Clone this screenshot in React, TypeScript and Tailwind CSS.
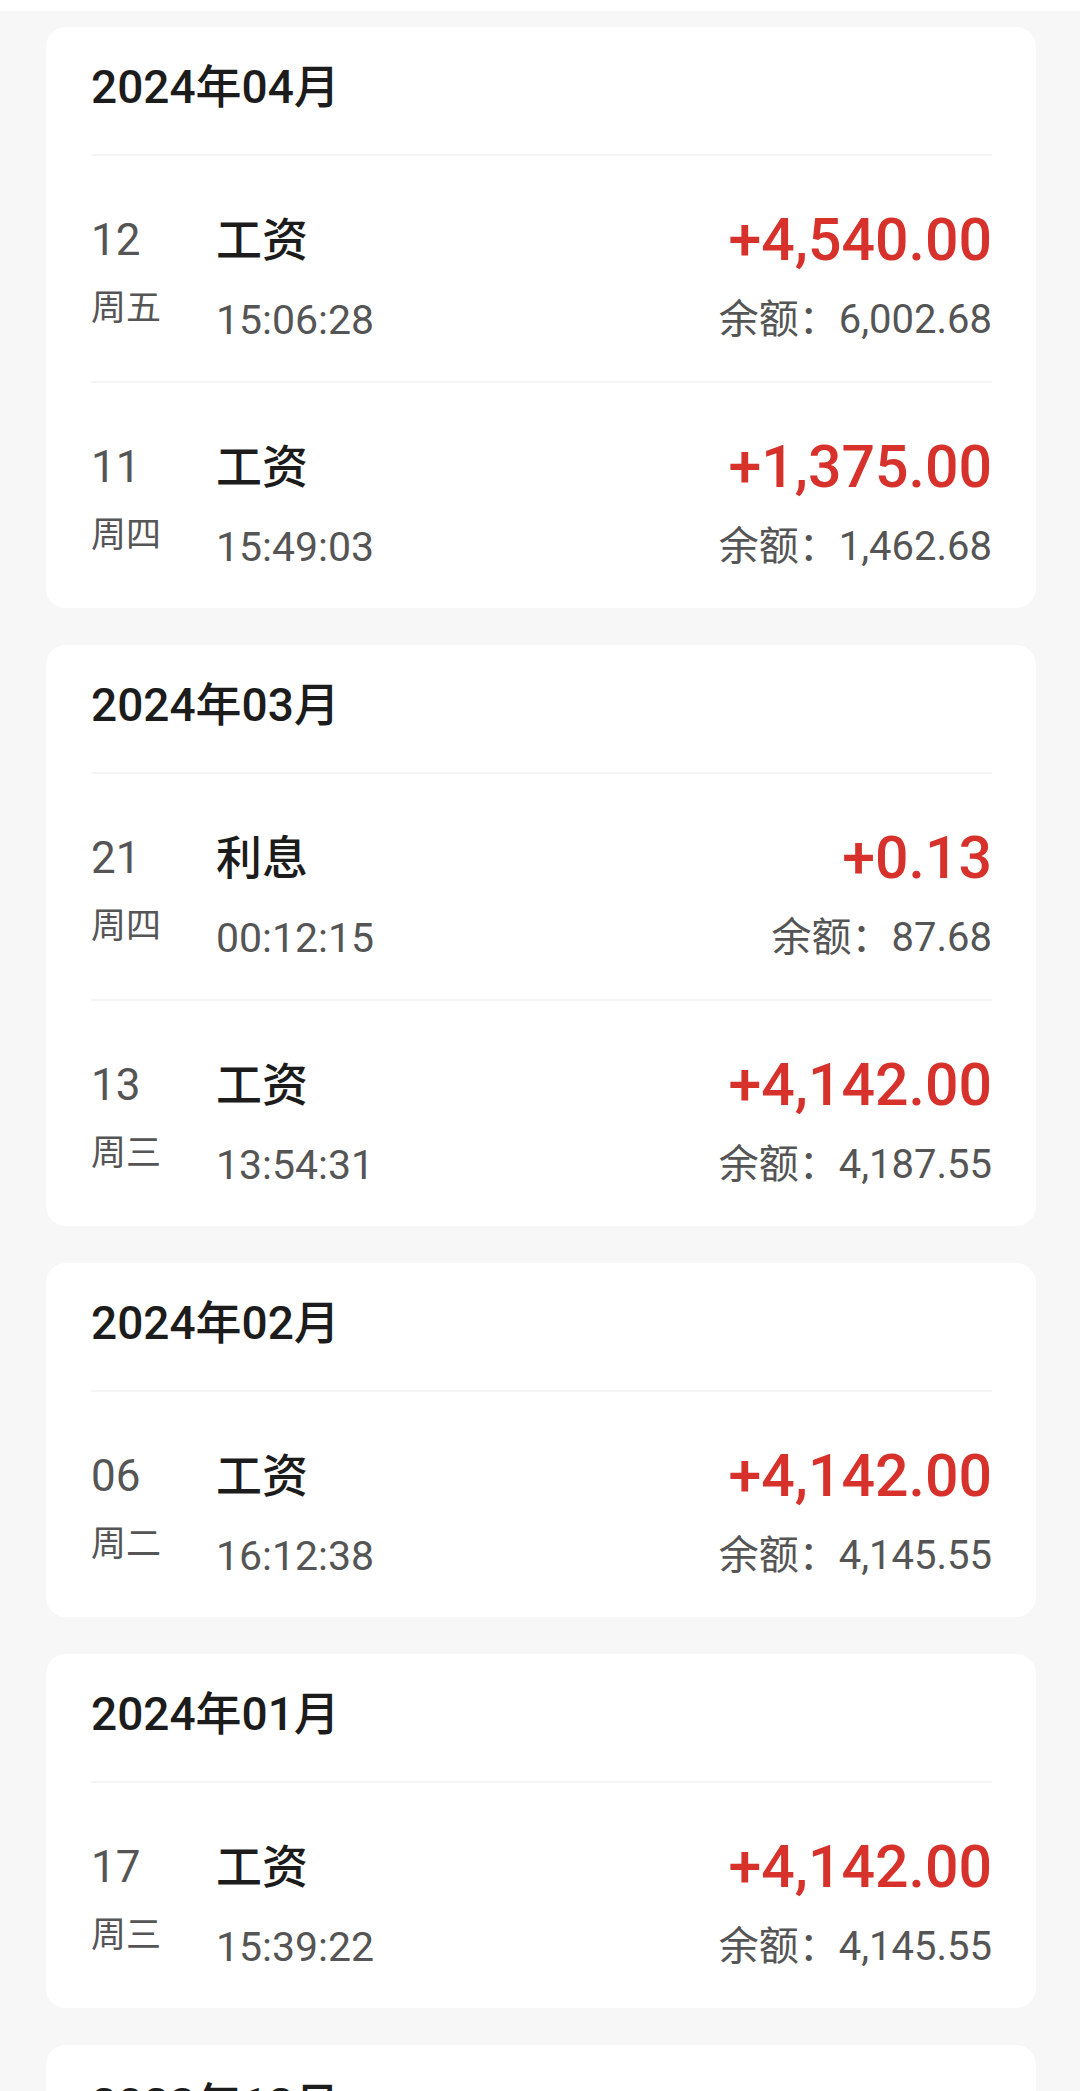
type Item = {
  day: string;
  week: string;
  title: string;
  time: string;
  amount: string;
  balance: string;
};

type Month = {
  label: string;
  items: Item[];
};

const months: Month[] = [
  {
    label: '2024年04月',
    items: [
      { day: '12', week: '周五', title: '工资', time: '15:06:28', amount: '+4,540.00', balance: '6,002.68' },
      { day: '11', week: '周四', title: '工资', time: '15:49:03', amount: '+1,375.00', balance: '1,462.68' },
    ],
  },
  {
    label: '2024年03月',
    items: [
      { day: '21', week: '周四', title: '利息', time: '00:12:15', amount: '+0.13', balance: '87.68' },
      { day: '13', week: '周三', title: '工资', time: '13:54:31', amount: '+4,142.00', balance: '4,187.55' },
    ],
  },
  {
    label: '2024年02月',
    items: [
      { day: '06', week: '周二', title: '工资', time: '16:12:38', amount: '+4,142.00', balance: '4,145.55' },
    ],
  },
  {
    label: '2024年01月',
    items: [
      { day: '17', week: '周三', title: '工资', time: '15:39:22', amount: '+4,142.00', balance: '4,145.55' },
    ],
  },
  {
    label: '2023年12月',
    items: [
      { day: '15', week: '周五', title: '工资', time: '15:21:47', amount: '+4,142.00', balance: '3.55' },
    ],
  },
];

function Row({ item }: { item: Item }) {
  return (
    <div className="flex border-t-2 border-[#f4f4f4] pt-[48px] pb-[35px]">
      <div className="flex w-[125px] shrink-0 flex-col">
        <span className="text-[44px] leading-[72px] text-[#555555]">{item.day}</span>
        <span className="mt-[9px] text-[35px] leading-[48px] text-[#555555]">{item.week}</span>
      </div>
      <div className="flex flex-1 flex-col">
        <span className="text-[46px] font-medium leading-[72px] text-[#1c1c1c]">{item.title}</span>
        <span className="mt-[18px] text-[41px] leading-[52px] text-[#555555]">{item.time}</span>
      </div>
      <div className="flex flex-col items-end">
        <span className="text-[59px] font-medium leading-[72px] text-[#d6312b]">{item.amount}</span>
        <span className="mt-[18px] text-[40px] leading-[52px] text-[#555555]">
          余额：{item.balance}
        </span>
      </div>
    </div>
  );
}

export default function App() {
  return (
    <div
      className="min-h-screen bg-[#f7f7f7]"
      style={{ fontFamily: 'Roboto, "Noto Sans CJK SC", sans-serif' }}
    >
      <div className="h-[11px] bg-white" />
      <div className="flex flex-col gap-[37px] pl-[46px] pr-[44px] pt-[16px] pb-[40px]">
        {months.map((m) => (
          <div key={m.label} className="rounded-[20px] bg-white pl-[45px] pr-[44px]">
            <div className="pt-[32px] pb-[39px] text-[46px] font-medium leading-[56px] text-[#1c1c1c]">
              {m.label}
            </div>
            {m.items.map((it) => (
              <Row key={it.day + it.time} item={it} />
            ))}
          </div>
        ))}
      </div>
    </div>
  );
}
